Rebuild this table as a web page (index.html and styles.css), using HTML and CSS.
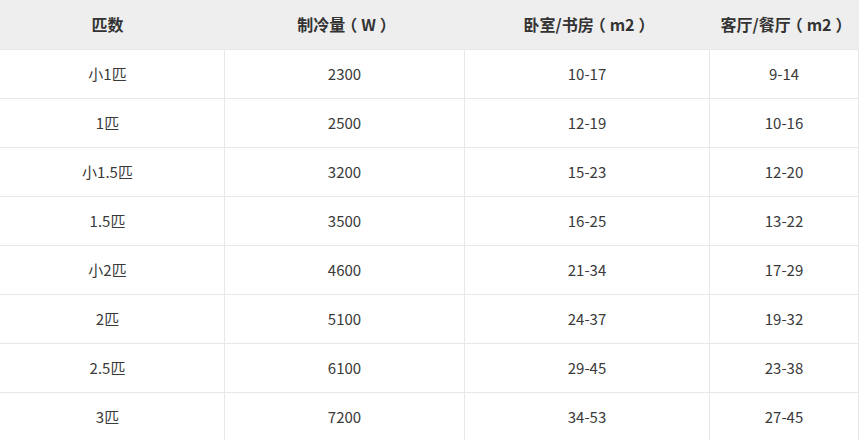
FILE: index.html
```html
<!DOCTYPE html>
<html lang="zh-CN">
<head>
<meta charset="utf-8">
<title>空调匹数对照表</title>
<link rel="stylesheet" href="styles.css">
</head>
<body>
<div class="spec-table" role="table">
  <div class="cell head" role="columnheader">匹数</div>
  <div class="cell head" role="columnheader">制冷量<span class="paren">（</span>W<span class="paren">）</span></div>
  <div class="cell head" role="columnheader">卧室/书房<span class="paren">（</span>m2<span class="paren">）</span></div>
  <div class="cell head" role="columnheader">客厅/餐厅<span class="paren">（</span>m2<span class="paren">）</span></div>

  <div class="cell">小1匹</div><div class="cell">2300</div><div class="cell">10-17</div><div class="cell">9-14</div>
  <div class="cell">1匹</div><div class="cell">2500</div><div class="cell">12-19</div><div class="cell">10-16</div>
  <div class="cell">小1.5匹</div><div class="cell">3200</div><div class="cell">15-23</div><div class="cell">12-20</div>
  <div class="cell">1.5匹</div><div class="cell">3500</div><div class="cell">16-25</div><div class="cell">13-22</div>
  <div class="cell">小2匹</div><div class="cell">4600</div><div class="cell">21-34</div><div class="cell">17-29</div>
  <div class="cell">2匹</div><div class="cell">5100</div><div class="cell">24-37</div><div class="cell">19-32</div>
  <div class="cell">2.5匹</div><div class="cell">6100</div><div class="cell">29-45</div><div class="cell">23-38</div>
  <div class="cell">3匹</div><div class="cell">7200</div><div class="cell">34-53</div><div class="cell">27-45</div>
</div>
</body>
</html>
```
FILE: styles.css
```css
html, body {
  margin: 0;
  padding: 0;
  background: #ffffff;
  overflow: hidden;
}

body {
  font-family: "Noto Sans CJK SC", "Noto Sans", sans-serif;
  font-size: 15px;
  color: #333333;
}

.spec-table {
  display: grid;
  grid-template-columns: 234px 240px 245px 149px;
  margin-left: -9px;
}

.cell {
  box-sizing: border-box;
  height: 49px;
  padding-bottom: 2px;
  display: flex;
  align-items: center;
  justify-content: center;
  border-right: 1px solid #e8e8e8;
  border-bottom: 1px solid #e8e8e8;
  color: #3a3a3a;
}

.cell.head {
  height: 50px;
  padding-bottom: 1px;
  background: #eeeeee;
  border-right-color: #eeeeee;
  border-bottom-color: #e8e8e8;
  font-size: 16px;
  font-weight: bold;
  color: #333333;
}

.paren {
  font-feature-settings: "halt";
  padding: 0 4px;
}
```
